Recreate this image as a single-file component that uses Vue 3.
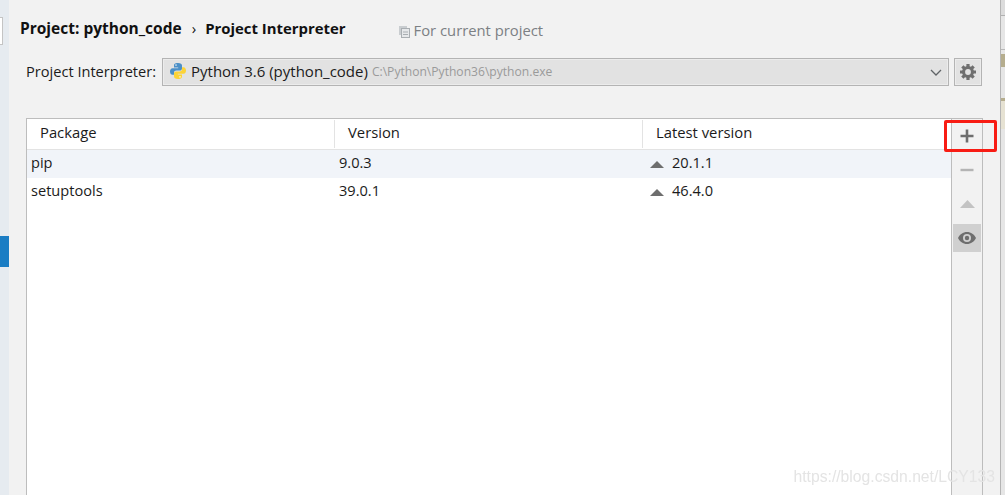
<script setup>
const rows = [
  { name: 'pip', version: '9.0.3', latest: '20.1.1' },
  { name: 'setuptools', version: '39.0.1', latest: '46.4.0' },
]
</script>

<template>
  <div class="window">
    <aside class="sidebar">
      <div class="search"></div>
      <div class="selected"></div>
    </aside>
    <main class="main">
      <header class="crumbs">
        <span class="crumb first">Project: python_code</span>
        <span class="sep">›</span>
        <span class="crumb">Project Interpreter</span>
        <span class="scope">
          <svg width="11" height="12" viewBox="0 0 11 12">
            <path d="M0 0h8v2H2v7H0z" fill="#c9cdd0" />
            <rect x="2.500" y="2.500" width="8" height="9" fill="#e6e8ea" stroke="#a9aeb2" />
            <path d="M4 6h5M4 8.500h5" stroke="#a9aeb2" />
          </svg>
          For current project
        </span>
      </header>
      <div class="interp">
        <label>Project Interpreter:</label>
        <div class="combo">
          <svg class="py" width="18" height="18" viewBox="0 0 18 18">
            <path d="M9 1C5.600 1 5 2.300 5 3.500V5.500H9.200V6.200H3.500C2 6.200 1 7.500 1 9.500S2 12.800 3.500 12.800H5V10.800C5 9.500 6 8.600 7.300 8.600H10.800C12 8.600 13 7.700 13 6.500V3.500C13 2.200 11.700 1 9 1Z" fill="#4a8fc7" />
            <path d="M9 17C12.400 17 13 15.700 13 14.500V12.500H8.800V11.800H14.500C16 11.800 17 10.500 17 8.500S16 5.200 14.500 5.200H13V7.200C13 8.500 12 9.400 10.700 9.400H7.200C6 9.400 5 10.300 5 11.500V14.500C5 15.800 6.300 17 9 17Z" fill="#fcd336" />
            <circle cx="7" cy="3.100" r=".8" fill="#e9f0f5" />
            <circle cx="11" cy="14.900" r=".8" fill="#fff6cf" />
          </svg>
          <span class="py-name">Python 3.6 (python_code)</span>
          <span class="py-path">C:\Python\Python36\python.exe</span>
          <svg class="chev" width="12" height="7" viewBox="0 0 12 7">
            <path d="M1 1l5 5 5-5" fill="none" stroke="#5f6366" stroke-width="1.300" />
          </svg>
        </div>
        <button class="gear" aria-label="Settings">
          <svg width="18" height="18" viewBox="0 0 18 18">
            <g stroke="#6e6e6e" stroke-width="3.200">
              <path d="M9 1v16M1 9h16M3.340 3.340l11.320 11.320M14.660 3.340L3.340 14.660" />
            </g>
            <circle cx="9" cy="9" r="6" fill="#6e6e6e" />
            <circle cx="9" cy="9" r="2.900" fill="#e2e2e2" />
          </svg>
        </button>
      </div>
      <section class="panel">
        <div class="table">
          <div class="thead">
            <div class="th">Package</div>
            <div class="th">Version</div>
            <div class="th">Latest version</div>
          </div>
          <div v-for="(r, i) in rows" :key="r.name" class="tr" :class="{ odd: i === 0 }">
            <div class="td">{{ r.name }}</div>
            <div class="td">{{ r.version }}</div>
            <div class="td latest"><i class="up"></i>{{ r.latest }}</div>
          </div>
        </div>
        <div class="tools">
          <div class="tool add">
            <svg width="14" height="14" viewBox="0 0 14 14"><path d="M7 0.500v13M0.500 7h13" stroke="#6e6e6e" stroke-width="2.600" /></svg>
            <div class="mark"></div>
          </div>
          <div class="tool">
            <svg width="14" height="14" viewBox="0 0 14 14"><path d="M0.500 7h13" stroke="#b4b4b4" stroke-width="2.400" /></svg>
          </div>
          <div class="tool">
            <svg width="15" height="8" viewBox="0 0 15 8"><path d="M7.500 0l7.500 8H0z" fill="#c3c3c3" /></svg>
          </div>
          <div class="tool on">
            <svg width="18" height="12" viewBox="0 0 18 12">
              <path fill="#6e6e6e" fill-rule="evenodd" d="M9 0c4 0 7.300 2.500 9 6-1.700 3.500-5 6-9 6S1.700 9.500 0 6c1.700-3.500 5-6 9-6zm0 2a4 4 0 1 0 0 8 4 4 0 0 0 0-8z" />
              <circle cx="9" cy="6" r="2.200" fill="#6e6e6e" />
            </svg>
          </div>
        </div>
        <div class="watermark">https://blog.csdn.net/LCY133</div>
      </section>
    </main>
    <div class="edge">
      <div class="e1"></div>
      <div class="e2"></div>
      <div class="e3"></div>
      <div class="e4"></div>
      <div class="e5"></div>
    </div>
  </div>
</template>

<style>
html, body { margin: 0; background: #f2f2f2; overflow: hidden; }
</style>

<style scoped>
.window {
  width: 1005px;
  height: 495px;
  display: flex;
  overflow: hidden;
  background: #f2f2f2;
  font-family: "Open Sans", "Noto Sans", sans-serif;
  color: #1b1b1b;
  font-size: 14.600px;
}
.sidebar {
  width: 9px;
  flex: none;
  background: #e6ebf0;
  display: flex;
  flex-direction: column;
}
.search {
  width: 2px;
  height: 26px;
  margin-top: 17px;
  background: #fff;
  border: 1px solid #c4c4c4;
  border-left: 0;
}
.selected {
  height: 31px;
  margin-top: 191px;
  background: #1a7dc4;
}
.main {
  flex: 1;
  min-width: 0;
  padding-left: 11px;
  display: flex;
  flex-direction: column;
}
.crumbs {
  height: 58px;
  display: flex;
  align-items: flex-start;
  padding-top: 17px;
  box-sizing: border-box;
  font-size: 14.900px;
  font-weight: 700;
  color: #111;
  line-height: 22px;
}
.crumb.first { font-size: 15.500px; }
.sep { margin: 0 9px 0 10px; font-weight: 400; }
.scope {
  margin-left: 53px;
  margin-top: 2px;
  font-size: 14.800px;
  font-weight: 400;
  color: #7c8084;
  display: flex;
  align-items: center;
  gap: 4px;
}
.scope svg { margin-top: 3px; }
.interp {
  display: flex;
  align-items: center;
  height: 28px;
  padding-left: 6px;
}
.interp label { width: 136px; flex: none; padding-bottom: 2px; }
.combo {
  width: 787px;
  height: 28px;
  box-sizing: border-box;
  border: 1px solid #b4b4b4;
  box-shadow: inset 0 0 0 1px #ececec;
  background: #e2e2e2;
  display: flex;
  align-items: center;
  padding-left: 6px;
  padding-bottom: 2px;
  position: relative;
}
.py { margin-right: 4px; }
.py-name { font-size: 15px; }
.py-path { font-size: 12.100px; color: #9a9a9a; margin-left: 4px; }
.chev { margin-left: auto; margin-right: 6px; margin-top: 2px; }
.gear {
  width: 28px;
  height: 28px;
  margin-left: 5px;
  padding: 0;
  border: 1px solid #b4b4b4;
  background: #e2e2e2;
  box-shadow: inset 0 0 0 1px #ececec;
  display: flex;
  align-items: center;
  justify-content: center;
}
.panel {
  margin: 32px 0 0 6px;
  flex: 1;
  width: 957px;
  box-sizing: border-box;
  border: 1px solid #bdbdbd;
  border-bottom: 0;
  display: flex;
  position: relative;
}
.table { flex: 1; background: #fff; border-right: 1px solid #bdbdbd; }
.thead {
  height: 31px;
  display: grid;
  grid-template-columns: 308px 308px 1fr;
  align-items: start;
  border-bottom: 1px solid #e3e3e3;
  box-sizing: border-box;
}
.th { padding-left: 13px; height: 28px; line-height: 24px; border-right: 1px solid #e3e3e3; margin-top: 1px; font-size: 14.800px; }
.th:last-child { border-right: 0; }
.tr {
  height: 28px;
  display: grid;
  grid-template-columns: 308px 308px 1fr;
  align-items: start;
  padding-left: 4px;
}
.td { line-height: 25px; height: 25px; }
.tr.odd { background: #f1f4f9; }
.latest { display: flex; align-items: center; }
.up {
  width: 0;
  height: 0;
  border-left: 7px solid transparent;
  border-right: 7px solid transparent;
  border-bottom: 7px solid #6e6e6e;
  margin: 3px 8px 0 3px;
}
.tools { width: 30px; flex: none; display: flex; flex-direction: column; align-items: center; gap: 6px; padding-top: 3px; }
.tool {
  width: 28px;
  height: 28px;
  flex: none;
  display: flex;
  align-items: center;
  justify-content: center;
}
.tool.add { position: relative; }
.tool.on { background: #d0d0d0; }
.mark {
  position: absolute;
  left: -9px;
  top: -2px;
  width: 53px;
  height: 32px;
  box-sizing: border-box;
  border: 3px solid #f81c14;
  border-radius: 2px;
}
.watermark {
  position: absolute;
  right: -13px;
  bottom: 9px;
  font-family: "Liberation Sans", sans-serif;
  font-size: 15.700px;
  color: #e4e4e4;
  filter: blur(.4px);
}
.edge {
  width: 5px;
  flex: none;
  background: #e6e6e6;
  border-left: 1px solid #b4b4b4;
  box-sizing: border-box;
  display: flex;
  flex-direction: column;
}
.e1 { height: 15px; background: #dcdcdc; border-bottom: 1px solid #b0b0b0; }
.e2 { height: 33px; border-bottom: 1px solid #b8b8b8; margin-bottom: 4px; }
.e3 { height: 13px; background: #b5ad8e; margin-bottom: 31px; }
.e4 { height: 3px; background: #b5ad8e; }
.e5 { height: 28px; background: #e6e2d3; }
</style>
